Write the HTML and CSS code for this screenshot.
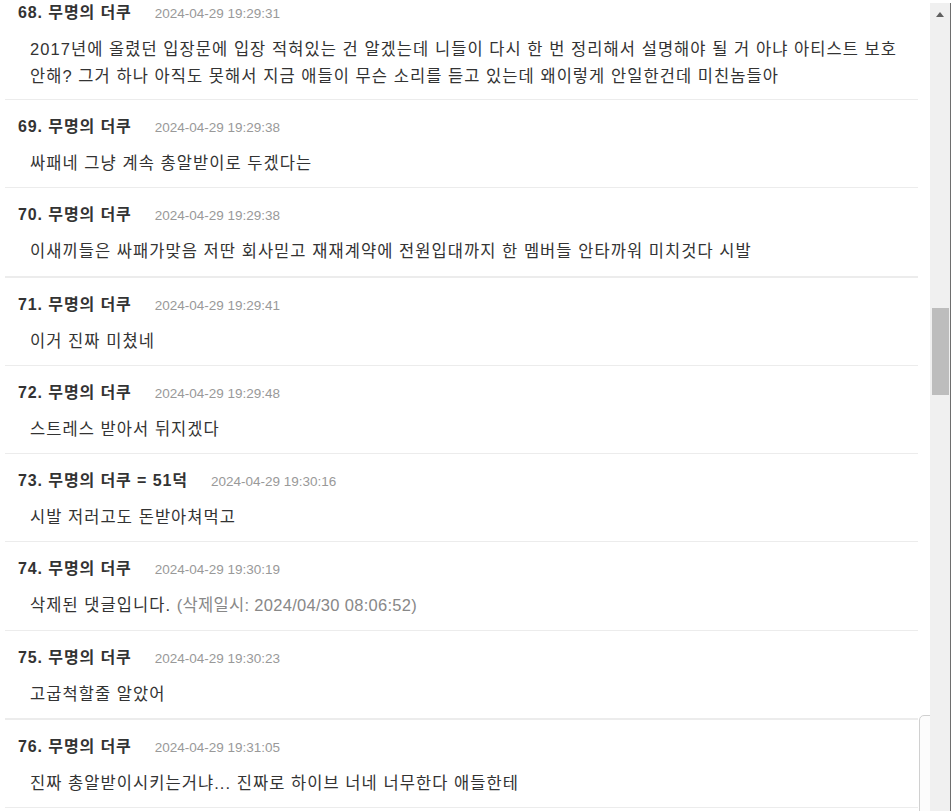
FILE: index.html
```html
<!DOCTYPE html>
<html lang="ko">
<head>
<meta charset="utf-8">
<title>댓글</title>
<link rel="stylesheet" href="styles.css">
</head>
<body>
<main class="page">
  <div class="list">
    <div class="comment">
      <div class="head"><span class="name">68. 무명의 더쿠</span><span class="date">2024-04-29 19:29:31</span></div>
      <div class="body">2017년에 올렸던 입장문에 입장 적혀있는 건 알겠는데 니들이 다시 한 번 정리해서 설명해야 될 거 아냐 아티스트 보호 안해? 그거 하나 아직도 못해서 지금 애들이 무슨 소리를 듣고 있는데 왜이렇게 안일한건데 미친놈들아</div>
    </div>
    <div class="comment">
      <div class="head"><span class="name">69. 무명의 더쿠</span><span class="date">2024-04-29 19:29:38</span></div>
      <div class="body">싸패네 그냥 계속 총알받이로 두겠다는</div>
    </div>
    <div class="comment thick">
      <div class="head"><span class="name">70. 무명의 더쿠</span><span class="date">2024-04-29 19:29:38</span></div>
      <div class="body">이새끼들은 싸패가맞음 저딴 회사믿고 재재계약에 전원입대까지 한 멤버들 안타까워 미치것다 시발</div>
    </div>
    <div class="comment">
      <div class="head"><span class="name">71. 무명의 더쿠</span><span class="date">2024-04-29 19:29:41</span></div>
      <div class="body">이거 진짜 미쳤네</div>
    </div>
    <div class="comment">
      <div class="head"><span class="name">72. 무명의 더쿠</span><span class="date">2024-04-29 19:29:48</span></div>
      <div class="body">스트레스 받아서 뒤지겠다</div>
    </div>
    <div class="comment">
      <div class="head"><span class="name">73. 무명의 더쿠 = 51덕</span><span class="date">2024-04-29 19:30:16</span></div>
      <div class="body">시발 저러고도 돈받아쳐먹고</div>
    </div>
    <div class="comment">
      <div class="head"><span class="name">74. 무명의 더쿠</span><span class="date">2024-04-29 19:30:19</span></div>
      <div class="body">삭제된 댓글입니다. <span class="deleted">(삭제일시: 2024/04/30 08:06:52)</span></div>
    </div>
    <div class="comment thick">
      <div class="head"><span class="name">75. 무명의 더쿠</span><span class="date">2024-04-29 19:30:23</span></div>
      <div class="body">고굽척할줄 알았어</div>
    </div>
    <div class="comment">
      <div class="head"><span class="name">76. 무명의 더쿠</span><span class="date">2024-04-29 19:31:05</span></div>
      <div class="body">진짜 총알받이시키는거냐... 진짜로 하이브 너네 너무한다 애들한테</div>
    </div>
  </div>
  <div class="side-tab"></div>
</main>
<div class="scrollbar">
  <div class="arrow"></div>
  <div class="track"><div class="thumb"></div></div>
</div>
</body>
</html>
```
FILE: styles.css
```css
html, body {
  margin: 0;
  padding: 0;
  height: 100%;
  overflow: hidden;
  background: #fff;
}
body {
  display: flex;
  font-family: "Liberation Sans", "Noto Sans CJK KR", sans-serif;
  color: #333;
}
.page {
  flex: 1;
  position: relative;
  overflow: hidden;
}
.list {
  margin: -14px 12px 0 5px;
}
.comment {
  padding: 15px 13px 10.3px;
  border-bottom: 1px solid #ececec;
}
.comment:first-child {
  padding-bottom: 9px;
}
.comment.thick {
  border-bottom-width: 2px;
}
.head {
  display: flex;
  align-items: baseline;
  gap: 23px;
  height: 24px;
  line-height: 24px;
}
.name {
  font-size: 16px;
  font-weight: 700;
  letter-spacing: 0.9px;
  color: #333;
}
.date {
  font-family: "Liberation Sans", "Noto Sans CJK KR", sans-serif;
  font-size: 13.5px;
  color: #999;
}
.body {
  margin-top: 11px;
  padding-left: 12px;
  font-size: 16.5px;
  line-height: 27px;
  letter-spacing: 1.05px;
  word-spacing: 0;
  color: #333;
}
.deleted {
  color: #888;
  letter-spacing: 0.3px;
}
.side-tab {
  position: absolute;
  left: 919px;
  top: 715px;
  width: 20px;
  height: 200px;
  border: 1px solid #d0d0d0;
  border-top-left-radius: 5px;
  background: #fcfcfc;
}
.scrollbar {
  width: 20px;
  margin-top: 3px;
  background: #f0f0f0;
  border-right: 1px solid #6e6e6e;
  display: flex;
  flex-direction: column;
}
.arrow {
  width: 0;
  height: 0;
  margin: 9px auto 0 6px;
  border-left: 4.5px solid transparent;
  border-right: 4.5px solid transparent;
  border-bottom: 5px solid #606060;
}
.track {
  flex: 1;
  padding-top: 291px;
}
.thumb {
  margin-left: 2px;
  width: 17px;
  height: 87px;
  background: #bdbdbd;
}
```
